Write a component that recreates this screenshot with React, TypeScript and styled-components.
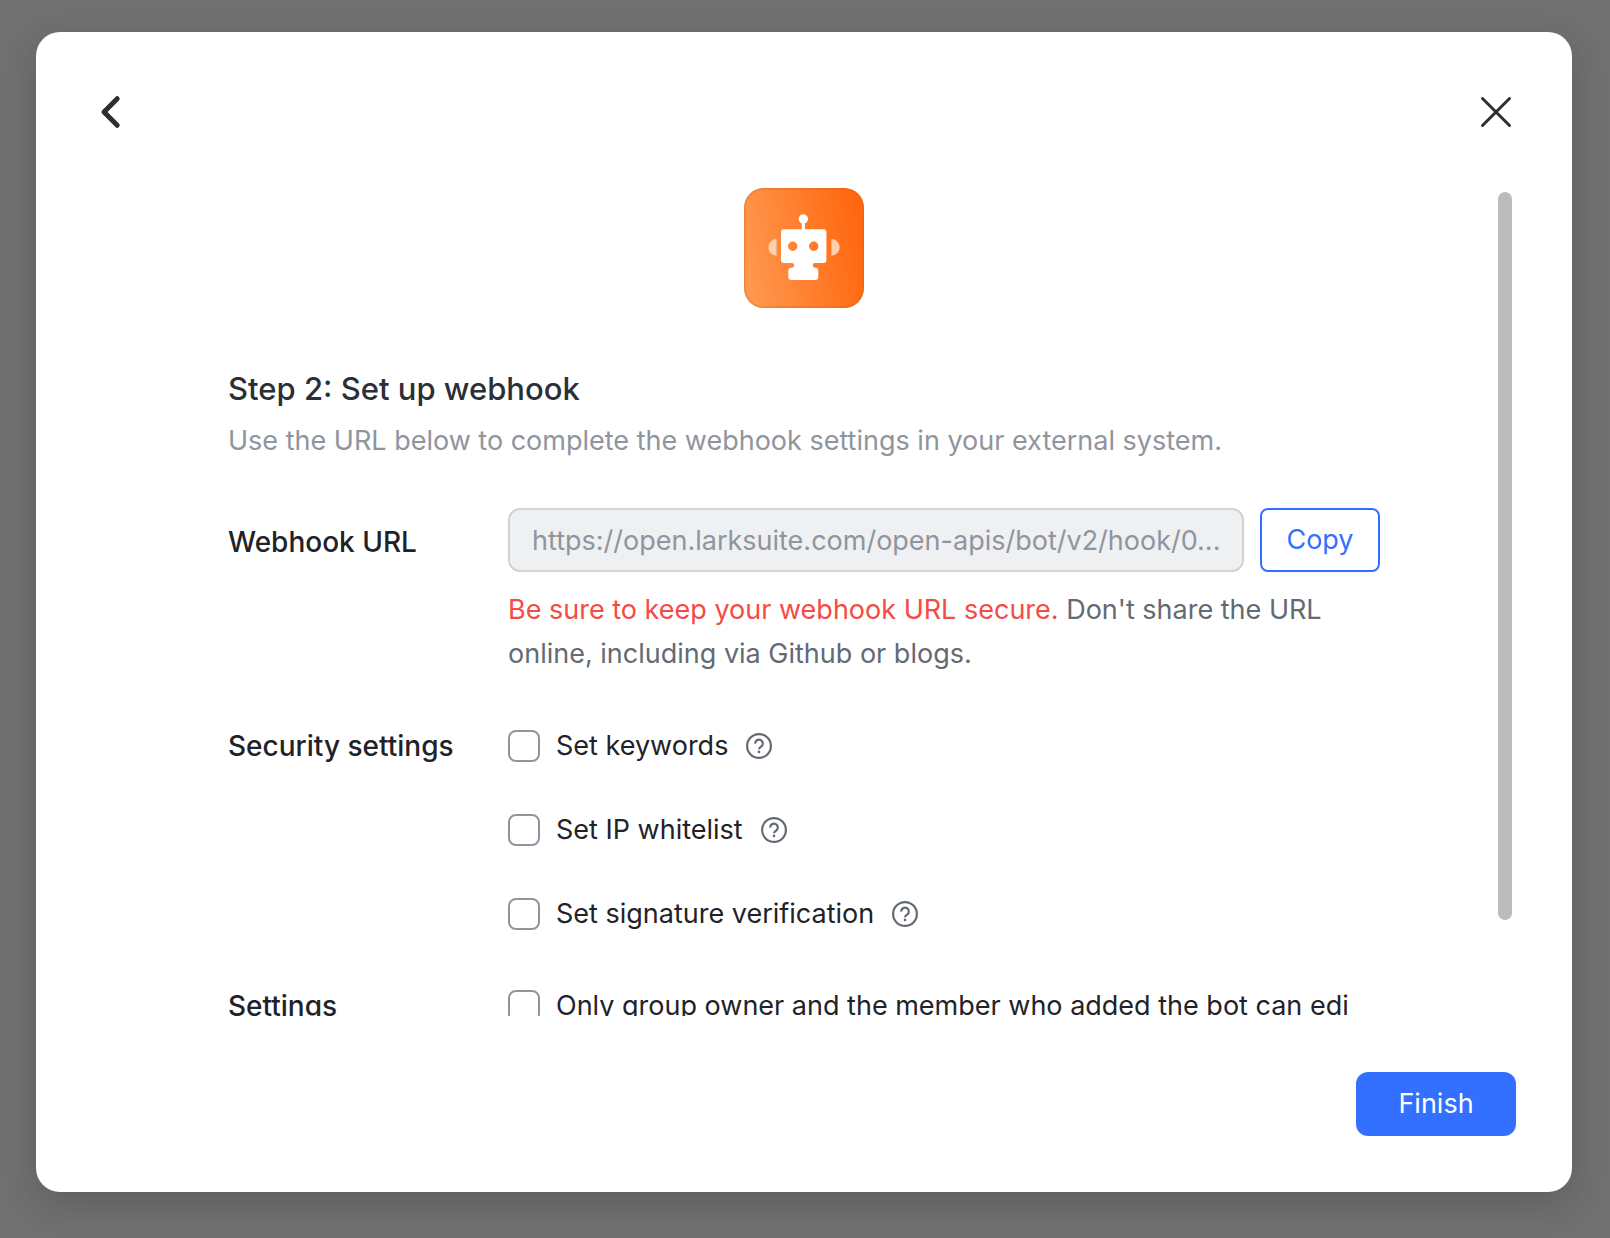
import React, { useLayoutEffect, useRef, useState } from "react";
import styled, { createGlobalStyle } from "styled-components";

const GlobalStyle = createGlobalStyle`
  *, *::before, *::after { box-sizing: border-box; }
  body {
    margin: 0;
    font-family: Inter, "Liberation Sans", sans-serif;
    font-size: 27px;
    line-height: 44px;
    color: #1f2329;
  }
`;

const Overlay = styled.div`
  display: flex;
  height: 100vh;
  padding: 32px 38px 46px 36px;
  background: #717171;
`;

const Dialog = styled.section`
  flex: 1;
  min-width: 0;
  display: flex;
  flex-direction: column;
  border-radius: 24px;
  background: #fff;
  box-shadow: 0 12px 36px rgba(31, 35, 41, 0.24);
`;

const Header = styled.header`
  display: flex;
  justify-content: space-between;
  padding: 60px 56px 56px;
`;

const IconButton = styled.button`
  display: flex;
  padding: 0;
  border: 0;
  background: none;
  color: #2b2f36;
  cursor: pointer;
`;

const Body = styled.div`
  flex: 1;
  min-height: 0;
  display: flex;
  padding-right: 60px;
`;

const ScrollArea = styled.div`
  flex: 1;
  min-width: 0;
  padding: 0 118px 92px 192px;
  overflow-x: hidden;
  overflow-y: auto;
  scrollbar-width: none;
`;

const Track = styled.div`
  width: 14px;
  margin: 4px 0;
`;

const Thumb = styled.div`
  border-radius: 7px;
  background: #bbbcbe;
`;

const BotIcon = styled.svg`
  display: block;
  margin: 0 auto 60px;
`;

const Title = styled.h1`
  margin: 0 0 8px;
  font-size: 31px;
  font-weight: 500;
  line-height: 42px;
  color: #2b2f36;
`;

const Subtitle = styled.p`
  margin: 0 0 44px;
  line-height: 46px;
  color: #8f959e;
`;

const Form = styled.form`
  display: flex;
  flex-direction: column;
  gap: 48px;
`;

const Row = styled.div<{ $tall?: boolean }>`
  display: grid;
  grid-template-columns: 280px minmax(0, 1fr);

  > :first-child {
    padding-top: ${(p) => (p.$tall ? "12px" : "0")};
    font-size: 28px;
    font-weight: 500;
  }
`;

const UrlLine = styled.div`
  display: flex;
  gap: 16px;
  margin-bottom: 16px;
`;

const UrlInput = styled.input`
  flex: 1;
  min-width: 0;
  height: 64px;
  padding: 0 8px 0 22px;
  border: 2px solid #d0d3d6;
  border-radius: 12px;
  background: #eff0f1;
  color: #8f959e;
  font: inherit;
  text-overflow: ellipsis;
`;

const Button = styled.button<{ $primary?: boolean }>`
  width: ${(p) => (p.$primary ? "160px" : "120px")};
  height: 64px;
  padding: 0;
  border: 2px solid #3370ff;
  border-radius: ${(p) => (p.$primary ? "12px" : "8px")};
  background: ${(p) => (p.$primary ? "#3370ff" : "#fff")};
  color: ${(p) => (p.$primary ? "#fff" : "#3370ff")};
  font: inherit;
  cursor: pointer;
`;

const Note = styled.p`
  margin: 0;
  color: #646a73;
`;

const Warning = styled.span`
  color: #f54a45;
`;

const Options = styled.div`
  display: flex;
  flex-direction: column;
  gap: 40px;
`;

const Option = styled.div`
  display: flex;
  align-items: center;
  gap: 16px;
`;

const OptionLabel = styled.label`
  display: flex;
  align-items: center;
  gap: 16px;
  white-space: nowrap;
`;

const Checkbox = styled.input`
  flex: none;
  appearance: none;
  width: 32px;
  height: 32px;
  margin: 0;
  border: 2px solid #8f959e;
  border-radius: 8px;
  background: #fff;

  &:checked {
    border-color: #3370ff;
    background: #3370ff;
  }
`;

const HelpButton = styled(IconButton)`
  color: #646a73;
`;

const Footer = styled.footer`
  display: flex;
  justify-content: flex-end;
  padding: 56px;
`;

const BackIcon = () => (
  <svg width="40" height="40" viewBox="0 0 40 40" fill="none" stroke="currentColor" strokeWidth="5" strokeLinecap="round" strokeLinejoin="round">
    <path d="M25.2 6.7 12 20l13.2 13.3" />
  </svg>
);

const CloseIcon = () => (
  <svg width="40" height="40" viewBox="0 0 40 40" fill="none" stroke="currentColor" strokeWidth="3" strokeLinecap="round">
    <path d="M6.500 6.500l27 27M33.500 6.500l-27 27" />
  </svg>
);

const HelpIcon = () => (
  <svg width="30" height="30" viewBox="0 0 30 30" fill="none" stroke="currentColor" strokeWidth="2.2">
    <circle cx="15" cy="15" r="11.9" />
    <path d="M11.200 12.600a3.800 3.800 0 1 1 5.900 3c-1.400.9-2.100 1.400-2.100 2.600" />
    <circle cx="15" cy="20.900" r="1.300" fill="currentColor" stroke="none" />
  </svg>
);

const Bot = () => (
  <BotIcon width="120" height="120" viewBox="0 0 120 120" aria-hidden="true">
    <defs>
      <linearGradient id="tile" x1="0" y1="0.6" x2="1" y2="0.4">
        <stop offset="0" stopColor="#ff984f" />
        <stop offset="1" stopColor="#ff660e" />
      </linearGradient>
    </defs>
    <rect width="120" height="120" rx="20" fill="url(#tile)" />
    <rect x="0.7" y="0.7" width="118.6" height="118.6" rx="19.3" fill="none" stroke="#c65a18" strokeOpacity="0.32" strokeWidth="1.4" />
    <path d="M32.600 51v16.600a8.300 8.300 0 0 1 0-16.600zM87.400 51v16.600a8.300 8.300 0 0 0 0-16.600z" fill="#ffcfae" />
    <g fill="#fff">
      <circle cx="59.3" cy="31" r="4.700" />
      <path d="M57.700 33h3.200v9h-3.200z" />
      <path
        fillRule="evenodd"
        d="M40 41.3h39.4a3 3 0 0 1 3 3V72a3 3 0 0 1-3 3h-8.4a2 2 0 0 0-2 2.6 2 2 0 0 0 2 2.1h.3a3 3 0 0 1 3 3V89a3 3 0 0 1-3 3h-24a3 3 0 0 1-3-3v-6.300a3 3 0 0 1 3-3h.7a2 2 0 0 0 2-2.100 2 2 0 0 0-2-2.600H40a3 3 0 0 1-3-3V44.300a3 3 0 0 1 3-3zM48.700 53.600a4.700 4.700 0 1 0 0 9.400 4.700 4.700 0 1 0 0-9.400zM69.700 53.600a4.700 4.700 0 1 0 0 9.400 4.700 4.700 0 1 0 0-9.400z"
      />
    </g>
  </BotIcon>
);

const securityOptions = [
  { id: "keywords", text: "Set keywords" },
  { id: "whitelist", text: "Set IP whitelist" },
  { id: "signature", text: "Set signature verification" },
];

export default function App() {
  const areaRef = useRef<HTMLDivElement>(null);
  const [thumb, setThumb] = useState({ size: 100, offset: 0 });

  const updateThumb = () => {
    const el = areaRef.current;
    if (!el) return;
    setThumb({
      size: (el.clientHeight / el.scrollHeight) * 100,
      offset: (el.scrollTop / el.clientHeight) * 100,
    });
  };

  useLayoutEffect(() => {
    updateThumb();
    window.addEventListener("resize", updateThumb);
    return () => window.removeEventListener("resize", updateThumb);
  }, []);

  return (
    <>
      <GlobalStyle />
      <Overlay>
        <Dialog role="dialog" aria-labelledby="dialog-title">
          <Header>
            <IconButton type="button" aria-label="Back">
              <BackIcon />
            </IconButton>
            <IconButton type="button" aria-label="Close">
              <CloseIcon />
            </IconButton>
          </Header>
          <Body>
            <ScrollArea ref={areaRef} onScroll={updateThumb}>
              <Bot />
              <Title id="dialog-title">Step 2: Set up webhook</Title>
              <Subtitle>Use the URL below to complete the webhook settings in your external system.</Subtitle>
              <Form id="webhook-form" onSubmit={(e) => e.preventDefault()}>
                <Row $tall>
                  <label htmlFor="webhook-url">Webhook URL</label>
                  <div>
                    <UrlLine>
                      <UrlInput id="webhook-url" readOnly value="https://open.larksuite.com/open-apis/bot/v2/hook/0..." />
                      <Button type="button">Copy</Button>
                    </UrlLine>
                    <Note>
                      <Warning>Be sure to keep your webhook URL secure.</Warning> Don't share the URL online, including via
                      Github or blogs.
                    </Note>
                  </div>
                </Row>
                <Row role="group" aria-labelledby="security-label">
                  <div id="security-label">Security settings</div>
                  <Options>
                    {securityOptions.map((o) => (
                      <Option key={o.id}>
                        <OptionLabel htmlFor={o.id}>
                          <Checkbox type="checkbox" id={o.id} />
                          {o.text}
                        </OptionLabel>
                        <HelpButton type="button" aria-label="Help">
                          <HelpIcon />
                        </HelpButton>
                      </Option>
                    ))}
                  </Options>
                </Row>
                <Row role="group" aria-labelledby="settings-label">
                  <div id="settings-label">Settings</div>
                  <OptionLabel htmlFor="owner-only">
                    <Checkbox type="checkbox" id="owner-only" />
                    Only group owner and the member who added the bot can edi
                  </OptionLabel>
                </Row>
              </Form>
            </ScrollArea>
            <Track>
              <Thumb style={{ height: `${thumb.size}%`, transform: `translateY(${thumb.offset}%)` }} />
            </Track>
          </Body>
          <Footer>
            <Button $primary type="submit" form="webhook-form">
              Finish
            </Button>
          </Footer>
        </Dialog>
      </Overlay>
    </>
  );
}
